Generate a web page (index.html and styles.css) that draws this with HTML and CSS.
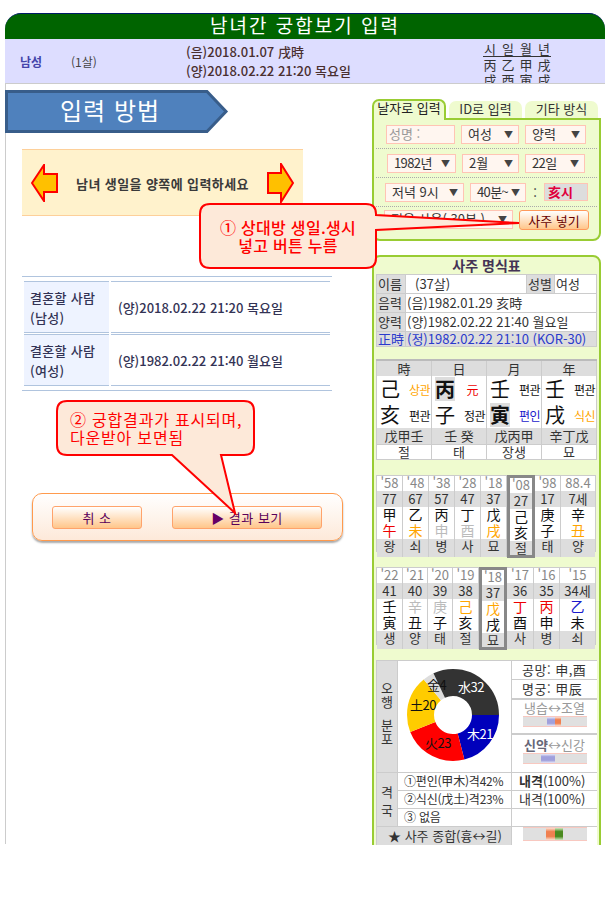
FILE: index.html
```html
<!DOCTYPE html>
<html lang="ko">
<head>
<meta charset="utf-8">
<title>남녀간 궁합보기 입력</title>
<link rel="stylesheet" href="styles.css">
</head>
<body>
<div class="page">
  <header class="title">남녀간 궁합보기 입력</header>
  <section class="band">
    <b class="gender">남성</b>
    <span class="age">(1살)</span>
    <div class="dates"><div>(음)2018.01.07 戌時</div><div>(양)2018.02.22 21:20 목요일</div></div>
    <div class="mini">
      <div class="mini-head"><span>시</span><span>일</span><span>월</span><span>년</span></div>
      <div><span>丙</span><span>乙</span><span>甲</span><span>戌</span></div>
      <div><span>戌</span><span>酉</span><span>寅</span><span>戌</span></div>
    </div>
  </section>
  <div class="main">
    <div class="left">
      <div class="banner">
        <svg class="banner-bg" width="224" height="43" viewBox="0 0 224 43"><polygon points="1.5,1.5 202,1.5 221,21.5 202,41.5 1.5,41.5" fill="#4f81bd" stroke="#385d8a" stroke-width="3"/></svg>
        <span class="banner-text">입력 방법</span>
      </div>
      <div class="notice">
        <svg width="27" height="38" viewBox="0 0 27 38"><polygon points="1,19 13,1 13,10 26,10 26,28 13,28 13,37" fill="#ffc000" stroke="#f00" stroke-width="2"/></svg>
        <span class="notice-text">남녀 생일을 양쪽에 입력하세요</span>
        <svg width="27" height="40" viewBox="0 0 27 40"><polygon points="26,20 14,1 14,10 1,10 1,30 14,30 14,39" fill="#ffc000" stroke="#f00" stroke-width="2"/></svg>
      </div>
      <div class="persons">
        <div class="person"><div class="person-th">결혼할 사람<br>(남성)</div><div class="person-td">(양)2018.02.22 21:20 목요일</div></div>
        <div class="person"><div class="person-th">결혼할 사람<br>(여성)</div><div class="person-td">(양)1982.02.22 21:40 월요일</div></div>
      </div>
      <div class="actions">
        <button class="btn btn-cancel">취 소</button>
        <button class="btn btn-result"><span class="tri">▶</span> 결과 보기</button>
      </div>
    </div>
    <aside class="right">
      <nav class="tabs">
        <div class="tab tab-on">날자로 입력</div>
        <div class="tab">ID로 입력</div>
        <div class="tab">기타 방식</div>
      </nav>
      <form class="form">
        <div class="frow r1">
          <div class="sel w69 muted">성명 :</div>
          <div class="sel w58">여성<i>▼</i></div>
          <div class="sel w61">양력<i>▼</i></div>
        </div>
        <div class="frow r2">
          <div class="sel w69 num">1982년<i>▼</i></div>
          <div class="sel w57">2월<i>▼</i></div>
          <div class="sel w60 num">22일<i>▼</i></div>
        </div>
        <div class="frow r3">
          <div class="sel w79">저녁 9시<i>▼</i></div>
          <div class="sel w56 num">40분~<i>▼</i></div>
          <span class="colon">:</span>
          <div class="hour">亥시</div>
        </div>
        <div class="frow r4">
          <div class="sel w129">적용 사용( 30분 )<i>▼</i></div>
          <button class="put">사주 넣기</button>
        </div>
      </form>
      <section class="saju">
        <h2 class="saju-title">사주 명식표</h2>
        <div class="info">
          <div class="g">이름</div><div class="name">(37살)</div><div class="g">성별</div><div>여성</div>
          <div class="g">음력</div><div class="wide">(음)1982.01.29 亥時</div>
          <div class="g">양력</div><div class="wide">(양)1982.02.22 21:40 월요일</div>
          <div class="g blue">正時</div><div class="wide g blue">(정)1982.02.22 21:10 (KOR-30)</div>
        </div>
        <div class="pillars">
          <div class="ph">時</div><div class="ph">日</div><div class="ph">月</div><div class="ph">年</div>
          <div class="pc"><b>己</b><span class="orange">상관</span></div>
          <div class="pc"><b class="mark">丙</b><span class="red yuan">元</span></div>
          <div class="pc"><b>壬</b><span>편관</span></div>
          <div class="pc"><b>壬</b><span>편관</span></div>
          <div class="pc"><b>亥</b><span>편관</span></div>
          <div class="pc"><b>子</b><span>정관</span></div>
          <div class="pc"><b class="mark">寅</b><span class="blue">편인</span></div>
          <div class="pc"><b>戌</b><span class="orange">식신</span></div>
          <div class="ph small">戊甲壬</div><div class="ph small">壬 癸</div><div class="ph small">戊丙甲</div><div class="ph small">辛丁戊</div>
          <div class="pf">절</div><div class="pf">태</div><div class="pf">장생</div><div class="pf">묘</div>
        </div>
        <div class="dw dw1">
          <div class="col"><i>'58</i><u>77</u><em>甲</em><em class="red">午</em><u class="end">왕</u></div>
          <div class="col"><i>'48</i><u>67</u><em>乙</em><em class="orange">未</em><u class="end">쇠</u></div>
          <div class="col"><i>'38</i><u>57</u><em>丙</em><em class="silver">申</em><u class="end">병</u></div>
          <div class="col"><i>'28</i><u>47</u><em>丁</em><em class="silver">酉</em><u class="end">사</u></div>
          <div class="col"><i>'18</i><u>37</u><em>戊</em><em class="orange">戌</em><u class="end">묘</u></div>
          <div class="col hl"><i>'08</i><u>27</u><em>己</em><em>亥</em><u class="end">절</u></div>
          <div class="col"><i>'98</i><u>17</u><em>庚</em><em>子</em><u class="end">태</u></div>
          <div class="col"><i>88.4</i><u>7세</u><em>辛</em><em class="orange">丑</em><u class="end">양</u></div>
        </div>
        <div class="dw dw2">
          <div class="col"><i>'22</i><u>41</u><em>壬</em><em>寅</em><u class="end">생</u></div>
          <div class="col"><i>'21</i><u>40</u><em class="silver">辛</em><em>丑</em><u class="end">양</u></div>
          <div class="col"><i>'20</i><u>39</u><em class="silver">庚</em><em>子</em><u class="end">태</u></div>
          <div class="col"><i>'19</i><u>38</u><em class="orange">己</em><em>亥</em><u class="end">절</u></div>
          <div class="col hl"><i>'18</i><u>37</u><em class="orange">戊</em><em>戌</em><u class="end">묘</u></div>
          <div class="col"><i>'17</i><u>36</u><em class="red">丁</em><em>酉</em><u class="end">사</u></div>
          <div class="col"><i>'16</i><u>35</u><em class="red">丙</em><em>申</em><u class="end">병</u></div>
          <div class="col"><i>'15</i><u>34세</u><em class="blue">乙</em><em>未</em><u class="end">쇠</u></div>
        </div>
        <div class="five">
          <div class="side">오<br>행<span class="sgap"></span>분<br>포</div>
          <div class="chart">
            <svg width="114" height="111" viewBox="0 0 114 111">
              <g fill="none" stroke-width="27">
                <circle cx="55" cy="54" r="32.5" pathLength="100" stroke="#0000bb" stroke-dasharray="21 79"/>
                <circle cx="55" cy="54" r="32.5" pathLength="100" stroke="#f00" stroke-dasharray="23 77" stroke-dashoffset="-21"/>
                <circle cx="55" cy="54" r="32.5" pathLength="100" stroke="#ffcc00" stroke-dasharray="20 80" stroke-dashoffset="-44"/>
                <circle cx="55" cy="54" r="32.5" pathLength="100" stroke="#ddd" stroke-dasharray="4 96" stroke-dashoffset="-64"/>
                <circle cx="55" cy="54" r="32.5" pathLength="100" stroke="#333" stroke-dasharray="32 68" stroke-dashoffset="-68"/>
              </g>
              <text class="pie w" x="60" y="31">水32</text>
              <text class="pie w" x="69" y="78">木21</text>
              <text class="pie" x="27" y="87">火23</text>
              <text class="pie" x="12" y="49">土20</text>
              <text class="pie" x="29" y="29">金4</text>
            </svg>
          </div>
          <div class="stack">
            <div class="kv">공망: 申,酉</div>
            <div class="kv">명궁: 甲辰</div>
            <div class="meter m1"><span class="mt">냉습↔조열</span><div class="bar"><s class="f24"></s><s class="cool c8"></s><s class="warm w6"></s><s class="fill"></s></div></div>
            <div class="meter m2"><span class="mt"><b>신약</b>↔신강</span><div class="bar"><s class="f18"></s><s class="cool c14"></s><s class="fill"></s></div></div>
          </div>
          <div class="side s2">격<br>국</div>
          <div class="gk">①편인(甲木)격42%</div><div class="gv"><b>내격</b>(100%)</div>
          <div class="gk">②식신(戊土)격23%</div><div class="gv">내격(100%)</div>
          <div class="gk">③ 없음</div><div class="gv"></div>
          <div class="total">★ 사주 종합(흉↔길)</div>
          <div class="tb"><div class="bar b3"><s class="f23"></s><s class="warm w9"></s><s class="green"></s><s class="fill"></s></div></div>
        </div>
      </section>
    </aside>
  </div>
  <div class="callout c-one">
    <svg width="325" height="68" viewBox="0 0 325 68"><path d="M11 1H167Q177 1 177 11V12L320 20L177 27V55Q177 65 167 65H11Q1 65 1 55V11Q1 1 11 1Z" fill="#fde9d9" stroke="#f00" stroke-width="2"/></svg>
    <p class="c-one-text">① 상대방 생일.생시<br>넣고 버튼 누름</p>
  </div>
  <div class="callout c-two">
    <svg width="200" height="116" viewBox="0 0 200 116"><path d="M11 1H188Q198 1 198 11V45Q198 55 188 55H165L179 113L116 55H11Q1 55 1 45V11Q1 1 11 1Z" fill="#fde9d9" stroke="#f00" stroke-width="2"/></svg>
    <p class="c-two-text">② 궁합결과가 표시되며,<br>다운받아 보면됨</p>
  </div>
</div>
</body>
</html>
```
FILE: styles.css
```css
* { box-sizing: border-box; }
html, body { margin: 0; background: #fff; }
body { font-family: "Noto Sans CJK KR", "Liberation Sans", sans-serif; font-size: 13px; color: #333; }
.page { position: relative; width: 601px; height: 832px; margin: 13px 0 0 5px; overflow: hidden; }

.title { height: 26px; width: 600px; background: #006400; border-top: 1px solid #001a66; border-radius: 16px 16px 0 0; color: #fff; font-size: 19px; line-height: 22px; text-align: center; letter-spacing: 2px; }
.band { display: flex; align-items: center; width: 600px; height: 45px; background: #ddf; border-bottom: 1px solid #ccc; padding-left: 15px; overflow: hidden; }
.gender { width: 51px; color: #4444aa; font-size: 12px; }
.age { width: 115px; color: #444; font-size: 12px; }
.dates { width: 297px; font-size: 13px; line-height: 19px; color: #4a2f2f; font-weight: 500; }
.mini { align-self: flex-start; margin-top: 3px; font-size: 13px; line-height: 15px; color: #333; }
.mini > div { display: flex; gap: 4px; }
.mini span { width: 14px; text-align: center; }
.mini-head { border-bottom: 1px solid #333; line-height: 14px; }

.main { display: flex; height: 760px; border-left: 1px solid #ccc; }
.left { width: 366px; flex: none; }
.banner { position: relative; height: 43px; margin: 6px 0 0 -1px; }
.banner-bg { position: absolute; left: 0; top: 0; }
.banner-text { position: absolute; left: 55px; top: 3px; color: #fff; font-size: 24px; line-height: 34px; letter-spacing: 1px; }
.notice { display: flex; align-items: center; width: 281px; height: 67px; margin: 16px 0 0 16px; padding: 0 9px; background: #fff2cc; border-top: 1px solid #fdd09a; border-bottom: 1px solid #fdd09a; }
.notice-text { flex: 1; margin-top: 2px; font-size: 13px; font-weight: 700; text-align: center; color: #3a3a3a; letter-spacing: .4px; white-space: nowrap; }

.persons { display: flex; flex-direction: column; justify-content: space-between; width: 310px; height: 115px; margin: 60px 0 0 16px; padding: 4px 2px; border-top: 1px solid #b0c4de; border-bottom: 1px solid #b0c4de; }
.person { display: flex; gap: 2px; height: 52px; }
.person-th { width: 85px; padding: 6px 0 0 6px; background: #eef3ff; border-top: 1px solid #b0c4de; border-bottom: 1px solid #b0c4de; line-height: 20px; font-size: 13px; font-weight: 500; letter-spacing: .3px; color: #333355; white-space: nowrap; }
.person-td { flex: 1; display: flex; align-items: center; padding-left: 7px; border-top: 1px solid #b0c4de; border-bottom: 1px solid #b0c4de; font-size: 13px; font-weight: 500; color: #333355; white-space: nowrap; }

.actions { display: flex; align-items: center; gap: 30px; width: 311px; height: 48px; margin: 102px 0 0 26px; padding-left: 19px; border: 1px solid #ff9a4d; border-radius: 10px; background: linear-gradient(#fff, #fde9d9); box-shadow: 0 2px 2px #aaa; }
.btn { height: 23px; padding: 0; border: 1px solid #ffa36b; border-radius: 3px; background: linear-gradient(#fff, #ffc68a); color: #5a005a; font: 13px/1 "Noto Sans CJK KR", sans-serif; letter-spacing: .5px; }
.btn-cancel { width: 90px; }
.btn-result { width: 150px; }
.tri { color: #660066; }

.right { width: 229px; flex: none; margin-top: 15px; }
.tabs { position: relative; z-index: 1; display: flex; gap: 3px; height: 19px; }
.tab { width: 73px; height: 17px; margin-top: 2px; background: #effbcf; border-radius: 7px 7px 0 0; text-align: center; font-size: 13px; line-height: 16px; color: #333; white-space: nowrap; }
.tab-on { width: 74px; height: 21px; margin-top: 0; border: 2px solid #99cc33; border-bottom: 0; line-height: 14px; color: #222; }
.form { height: 123px; background: #effbcf; border: 2px solid #99cc33; border-radius: 0 0 8px 8px; }
.frow { display: flex; align-items: center; gap: 6px; height: 29px; margin: 0 2px; border-bottom: 1px dotted #aaa; }
.r1 { padding-left: 10px; }
.r2 { padding-left: 11px; }
.r3 { padding-left: 9px; }
.r4 { align-items: flex-start; padding: 3px 0 0 8px; border-bottom: 0; }
.sel { position: relative; height: 19px; padding-left: 6px; background: #fff6f0; border: 1px solid #ffc4b4; font-size: 13px; line-height: 16px; color: #333; white-space: nowrap; overflow: hidden; }
.sel i { position: absolute; right: 5px; top: 3px; font-style: normal; font-size: 9px; line-height: 12px; color: #444; letter-spacing: 0; }
.num { letter-spacing: -.6px; }
.muted { padding-left: 2px; color: #999; }
.w56 { width: 56px; } .w57 { width: 57px; } .w58 { width: 58px; } .w60 { width: 60px; } .w61 { width: 61px; }
.w69 { width: 69px; } .w79 { width: 79px; } .w129 { width: 129px; }
.colon { width: 6px; text-align: center; }
.hour { width: 44px; height: 18px; padding-left: 3px; background: #ddd; border: 1px solid #ffc4b4; color: #e0003c; font-weight: 700; font-size: 13px; line-height: 15px; }
.put { width: 70px; height: 20px; padding: 0; border: 1px solid #ff9a5c; border-radius: 3px; background: linear-gradient(#fff, #ffc68a); color: #660000; font: 13px/1 "Noto Sans CJK KR", sans-serif; }

.saju { height: 600px; margin-top: 14px; padding: 0 2px; background: #effbcf; border: 2px solid #99cc33; border-radius: 8px 8px 0 0; }
.saju-title { height: 17px; margin: 0; font-size: 14px; line-height: 16px; font-weight: 700; text-align: center; color: #443355; }
.info { display: grid; grid-template-columns: 28px 120px 27px 1fr; grid-template-rows: 18px 18px 18px 14px; gap: 1px; width: 221px; padding: 1px; background: #ccc; font-size: 13px; line-height: 17px; }
.info > div { padding-left: 1px; background: #fff; white-space: nowrap; overflow: hidden; }
.info > .g { background: #ddd; }
.info .name { padding-left: 9px; }
.info .wide { grid-column: span 3; }
.info .blue { color: #2a3acc; line-height: 13px; }

.pillars { display: grid; grid-template-columns: 54px 54px 54px 54px; grid-template-rows: 15px 26px 26px 16px 15px; column-gap: 1px; width: 221px; margin-top: 12px; padding: 0 1px 1px; border-top: 2px solid #bbb; background: #ccc; }
.ph { background: #ddd; text-align: center; font-size: 13px; line-height: 15px; }
.small { line-height: 16px; }
.pf { margin-top: 1px; background: #fff; text-align: center; font-size: 13px; line-height: 14px; }
.pc { display: flex; align-items: center; justify-content: space-between; padding: 0 1px 0 3px; background: #fff; }
.pc b { width: 20px; font-size: 20px; line-height: 24px; font-weight: 400; text-align: center; color: #111; }
.pc .mark { background: #ddd; font-weight: 700; }
.pc span { font-size: 12px; color: #111; letter-spacing: -.5px; }
.pc .yuan { margin-right: 7px; }
.pc .orange, .orange { color: #ffa500; }
.pc .red, .red { color: #e00; }
.pc .blue, .blue { color: #1a1acc; }
.silver { color: #bbb; }

.dw { display: grid; width: 220px; margin-top: 15px; border: 1px solid #ccc; }
.dw1 { grid-template-columns: 26px 26px 26px 26px 26px 28px 26px 1fr; height: 77px; }
.dw2 { grid-template-columns: 26px 25px 25px 26px 28px 27px 26px 1fr; height: 78px; }
.col { display: flex; flex-direction: column; border-right: 1px solid #ccc; }
.col:last-child { border-right: 0; }
.col i { height: 15px; background: #fff; font-style: normal; font-size: 13px; line-height: 14px; text-align: center; color: #888; }
.col u { height: 16px; background: #ddd; text-decoration: none; font-size: 13px; line-height: 15px; text-align: center; white-space: nowrap; }
.col em { height: 16px; background: #fff; font-style: normal; font-size: 14px; line-height: 14px; text-align: center; color: #111; }
.col em.red { color: #e00; } .col em.orange { color: #ffa500; } .col em.silver { color: #bbb; } .col em.blue { color: #1a1acc; }
.col .end { flex: 1; line-height: 14px; }
.hl { margin: -1px 0; border: 3px solid #888; }

.five { display: grid; grid-template-columns: 20px 113px 1fr; grid-template-rows: 111px 17px 17px 17px 18px; gap: 1px; width: 221px; margin-top: 15px; padding: 1px 0 0 1px; background: #ccc; }
.five > div { background: #fff; }
.five > .side { padding-top: 20px; background: #ddd; text-align: center; font-size: 13px; line-height: 14px; }
.five > .s2 { grid-row: span 3; padding-top: 10px; line-height: 18px; }
.sgap { display: block; height: 9px; }
.chart svg { display: block; }
.pie { font: 13px "Noto Sans CJK KR", sans-serif; fill: #111; letter-spacing: -.5px; }
.pie.w { fill: #fff; }
.five > .stack { display: grid; grid-template-rows: 18px 18px 34px 1fr; gap: 1px; background: #ccc; }
.kv { padding-left: 10px; background: #fff; font-size: 13px; line-height: 17px; letter-spacing: .5px; white-space: nowrap; }
.meter { margin-top: 1px; background: #fff; text-align: center; color: #999; font-size: 13px; line-height: 16px; }
.m1 { padding-top: 0; }
.m2 { padding-top: 2px; }
.mt { display: block; height: 16px; white-space: nowrap; }
.mt b { font-weight: 700; color: #667; }
.bar { display: flex; flex: none; width: 64px; height: 11px; margin: 0 auto; background: #e0e0e0; border-top: 1px solid #f8c8c0; border-bottom: 1px solid #f8c8c0; }
.bar s { display: block; text-decoration: none; }
.bar .fill { flex: 1; }
.f24 { width: 24px; } .f18 { width: 18px; } .f23 { width: 23px; }
.cool { background: linear-gradient(#e8e8f8, #a0a0dc 30%, #a0a0dc 70%, #e8e8f8); }
.warm { background: linear-gradient(#fbe0d0, #f08050 30%, #f08050 70%, #fbe0d0); }
.c8 { width: 8px; } .c14 { width: 14px; } .w6 { width: 6px; } .w9 { width: 9px; }
.green { width: 8px; background: linear-gradient(#d0e8c0, #4a8a20 30%, #4a8a20 70%, #d0e8c0); }
.gk { padding-left: 6px; font-size: 12px; line-height: 16px; letter-spacing: -.2px; white-space: nowrap; }
.gv { padding-left: 7px; font-size: 13px; line-height: 16px; white-space: nowrap; }
.five > .total { grid-column: span 2; padding-left: 11px; background: #ddd; font-size: 13px; line-height: 18px; white-space: nowrap; }
.b3 { height: 14px; }

.callout { position: absolute; z-index: 5; }
.callout svg { display: block; }
.callout p { position: absolute; margin: 0; color: #f00; white-space: nowrap; }
.c-one { left: 194px; top: 190px; }
.c-one-text { left: 0; top: 15px; width: 178px; font-size: 16px; font-weight: 500; line-height: 18px; text-align: center; letter-spacing: .3px; }
.c-two { left: 51px; top: 387px; }
.c-two-text { left: 14px; top: 10px; font-size: 16px; line-height: 18px; letter-spacing: .8px; }
```
